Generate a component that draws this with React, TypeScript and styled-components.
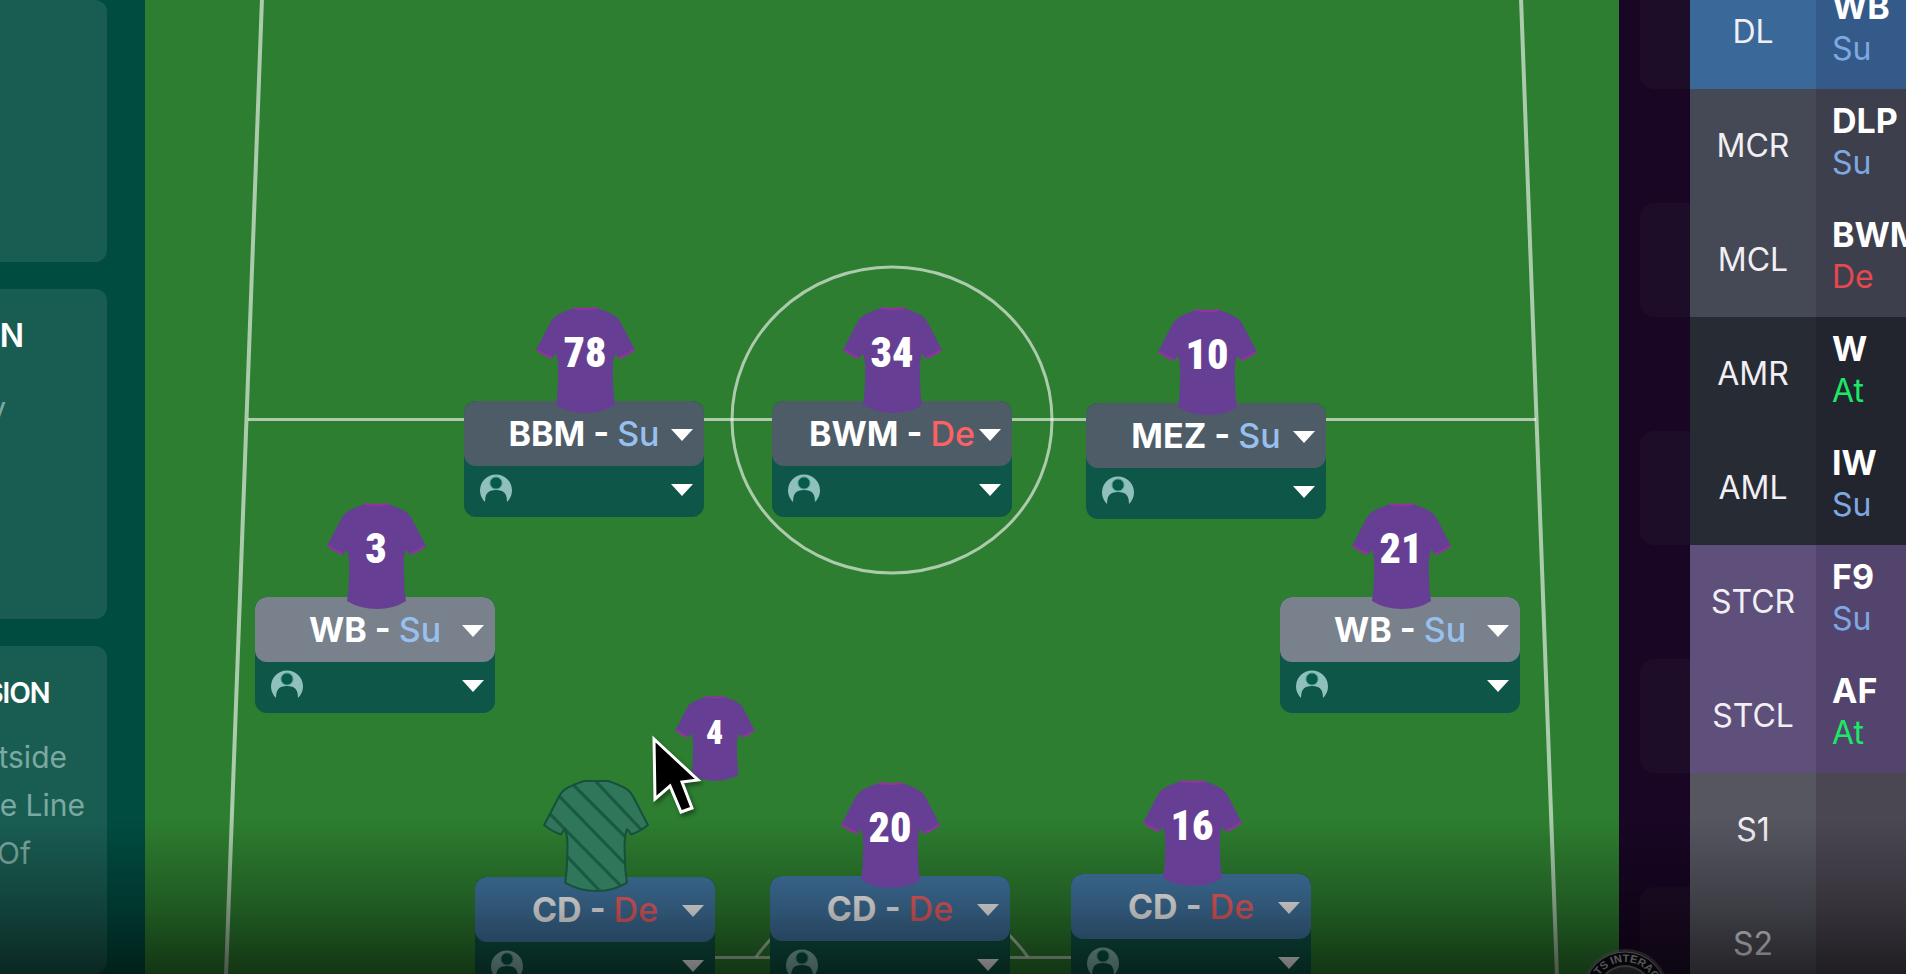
import React from "react";
import styled, { createGlobalStyle } from "styled-components";

type Duty = "Su" | "De" | "At";

const GlobalStyle = createGlobalStyle`
  *, *::before, *::after { box-sizing: border-box; }
  body { margin: 0; background: #180624; font-family: Inter, "Liberation Sans", sans-serif; }
  button { font: inherit; border: 0; padding: 0; cursor: pointer; }
`;

const Page = styled.div`
  position: relative;
  display: grid;
  grid-template-columns: 145px minmax(0, 1fr) 287px;
  height: 100vh;
  overflow: hidden;
`;

const BottomShade = styled.div`
  position: absolute;
  inset: auto 0 0 0;
  height: 156px;
  pointer-events: none;
  background: linear-gradient(rgba(0, 0, 0, 0), rgba(0, 0, 0, 0.28) 55%, rgba(0, 0, 0, 0.58));
`;

/* Instructions column */

const Instructions = styled.aside`
  display: grid;
  grid-template-rows: 262px 330px 1fr;
  gap: 27px;
  padding-right: 38px;
  background: #004c40;
  overflow: hidden;
`;

const InstructionCard = styled.section`
  display: flex;
  flex-direction: column;
  align-items: flex-end;
  min-width: 0;
  overflow: hidden;
  padding-top: 23px;
  border-radius: 0 12px 12px 0;
  background: #195d52;
  color: #7ba9a1;
  font-size: 30px;
  line-height: 48px;
  white-space: nowrap;
`;

const CardTitle = styled.h2<{ $compact?: boolean; $end: number }>`
  margin: 0 ${(p) => p.$end}px ${(p) => (p.$compact ? 16 : 24)}px 0;
  color: #fff;
  font-family: ${(p) => (p.$compact ? '"Inter Tight"' : "Inter")}, "Liberation Sans", sans-serif;
  font-size: ${(p) => (p.$compact ? 28 : 32)}px;
  font-weight: 600;
  line-height: 48px;
`;

const CardLine = styled.p<{ $end: number }>`
  margin: 0 ${(p) => p.$end}px 0 0;
`;

/* Pitch */

const Pitch = styled.main`
  position: relative;
  min-width: 0;
  overflow: hidden;
  background: #2d7e30;
`;

const Markings = styled.svg`
  display: block;
  width: 100%;
  height: 100%;
  fill: none;
  stroke: #ffffff;
  stroke-opacity: 0.6;
`;

const PlayerNode = styled.div<{ $x: number; $y: number }>`
  position: absolute;
  left: calc(${(p) => p.$x} / 1474 * 100%);
  top: calc(${(p) => p.$y} / 974 * 100%);
  display: flex;
  flex-direction: column;
  align-items: center;
  width: 240px;
`;

const DraggedItem = styled(PlayerNode)`
  width: 80px;
`;

const Kit = styled.svg<{ $w: number; $h: number; $overlap?: number }>`
  position: relative;
  z-index: 1;
  display: block;
  flex: none;
  width: ${(p) => p.$w}px;
  height: ${(p) => p.$h}px;
  margin-bottom: -${(p) => p.$overlap ?? 0}px;
  overflow: visible;
`;

const KitNumber = styled.text`
  fill: #fff;
  font-family: "Roboto Condensed", "Open Sans Condensed", sans-serif;
  font-size: 42px;
  font-weight: 900;
  text-anchor: middle;
`;

const PositionCard = styled.div`
  width: 100%;
  border-radius: 12px;
  overflow: hidden;
  background: #0e5748;
`;

const RoleButton = styled.button<{ $tone: string }>`
  position: relative;
  display: flex;
  align-items: center;
  justify-content: center;
  width: 100%;
  height: 65px;
  padding-top: 1px;
  border-radius: 12px;
  background: ${(p) => p.$tone};
  color: #fff;
  font-size: 34px;
  font-weight: 700;
  line-height: 40px;
  white-space: pre;
`;

const cardDuty: Record<Duty, string> = { Su: "#97c0ee", De: "#fb6265", At: "#1ae866" };
const tableDuty: Record<Duty, string> = { Su: "#7ea8e2", De: "#e5484f", At: "#1ae866" };

const CardDuty = styled.span<{ $duty: Duty }>`
  color: ${(p) => cardDuty[p.$duty]};
  font-weight: 500;
`;

const RoleCaret = styled.svg`
  position: absolute;
  right: 11px;
  top: 28px;
  width: 22px;
  height: 12px;
  fill: #fff;
`;

const PlayerButton = styled.button`
  display: flex;
  align-items: center;
  justify-content: space-between;
  width: 100%;
  height: 51px;
  padding: 0 11px 7px 14px;
  background: transparent;
`;

const Avatar = styled.svg`
  width: 36px;
  height: 34px;
`;

const Caret = styled.svg`
  width: 22px;
  height: 12px;
  margin-top: 4px;
  fill: #fff;
`;

const Pointer = styled.svg`
  position: absolute;
  left: calc(501 / 1474 * 100%);
  top: calc(728 / 974 * 100%);
  z-index: 2;
  width: 64px;
  height: 94px;
  filter: drop-shadow(2px 3px 2px rgba(0, 0, 0, 0.4));
`;

/* Squad list */

const Squad = styled.aside`
  position: relative;
  padding-left: 21px;
  background: #180624;
`;

const SquadClip = styled.div`
  height: 100vh;
  overflow: hidden;
`;

const SquadTable = styled.table`
  width: 100%;
  margin-top: -25px;
  border-collapse: collapse;
  table-layout: fixed;
`;

const SquadRow = styled.tr<{ $band?: boolean }>`
  height: 114px;

  td:first-child {
    background: ${(p) => (p.$band ? "#1e0d29" : "transparent")};
  }
`;

const StubCell = styled.td`
  width: 50px;
  padding: 0;
  border-radius: 14px 0 0 14px;
`;

const PositionCell = styled.th<{ $tone: string }>`
  width: 126px;
  padding: 0;
  background: ${(p) => p.$tone};
  color: #f1eff4;
  font-size: 32px;
  font-weight: 400;
  line-height: 40px;
  text-align: center;
`;

const RoleCell = styled.td<{ $tone: string }>`
  padding: 0 0 8px 16px;
  background: ${(p) => p.$tone};
  white-space: nowrap;
  overflow: hidden;
  line-height: 42px;
`;

const RoleName = styled.div`
  color: #fff;
  font-size: 34px;
  font-weight: 700;
`;

const RoleDuty = styled.div<{ $duty: Duty }>`
  color: ${(p) => tableDuty[p.$duty]};
  font-size: 32px;
`;

const Badge = styled.svg`
  position: absolute;
  left: -40px;
  bottom: 0;
  width: 92px;
  height: 27px;
`;

const BadgeText = styled.text`
  fill: #b4b4ba;
  font-family: "Liberation Sans", sans-serif;
  font-size: 11px;
  font-weight: 700;
`;

const SHIRT =
  "M38 1 Q29 4 23 7 Q17 10 14 16 L0 43 Q7 49 16 52 Q18 48 20 47 Q23 55 22 72 Q22 86 20 98 Q33 106 50 106 Q67 106 79 98 Q77 86 77 72 Q76 55 79 47 Q81 48 83 52 Q92 49 99 43 L85 16 Q82 10 76 7 Q70 4 61 1 Z";

function Shirt({ number, small }: { number: string; small?: boolean }) {
  return (
    <Kit
      viewBox={small ? "0 0 99 106" : "-1 0 99 106"}
      $w={small ? 80 : 99}
      $h={small ? 85 : 106}
      $overlap={small ? 0 : 12}
    >
      <path d={SHIRT} fill="#663f95" />
      <path d="M38 1 Q50 3 61 1 M1 43 Q8 48 16 51 M98 43 Q91 48 83 51" fill="none" stroke="#9c2fa3" strokeWidth="2" />
      <KitNumber x="49" y="60">{number}</KitNumber>
    </Kit>
  );
}

function EmptyShirt() {
  return (
    <Kit viewBox="-1 0 99 106" $w={104} $h={111} $overlap={14}>
      <clipPath id="shirt-outline">
        <path d={SHIRT} />
      </clipPath>
      <path d={SHIRT} fill="#30765a" />
      <path
        clipPath="url(#shirt-outline)"
        d="M80 8 L92 24 M48 0 L96 51 M27 4 L80 57 M12 13 L82 85 M4 31 L78 106 M20 71 L56 109"
        stroke="#1b5a42"
        strokeWidth="3"
      />
      <path d={SHIRT} fill="none" stroke="#17513d" strokeWidth="2" strokeLinejoin="round" />
    </Kit>
  );
}

type Player = { x: number; y: number; number?: string; role: string; duty: Duty; tone: string };

const MID = "#4e5c67";
const WIDE = "#78818c";
const BACK = "#4378a5";

const players: Player[] = [
  { x: 319, y: 307, number: "78", role: "BBM", duty: "Su", tone: MID },
  { x: 627, y: 307, number: "34", role: "BWM", duty: "De", tone: MID },
  { x: 941, y: 309, number: "10", role: "MEZ", duty: "Su", tone: MID },
  { x: 110, y: 503, number: "3", role: "WB", duty: "Su", tone: WIDE },
  { x: 1135, y: 503, number: "21", role: "WB", duty: "Su", tone: WIDE },
  { x: 330, y: 780, role: "CD", duty: "De", tone: BACK },
  { x: 625, y: 782, number: "20", role: "CD", duty: "De", tone: BACK },
  { x: 926, y: 780, number: "16", role: "CD", duty: "De", tone: BACK },
];

function PitchPlayer({ x, y, number, role, duty, tone }: Player) {
  return (
    <PlayerNode $x={x} $y={y}>
      {number ? <Shirt number={number} /> : <EmptyShirt />}
      <PositionCard>
        <RoleButton $tone={tone} aria-haspopup="listbox">
          {role} - <CardDuty $duty={duty}>{duty}</CardDuty>
          <RoleCaret viewBox="0 0 22 12">
            <path d="M0 0H22L11 12Z" />
          </RoleCaret>
        </RoleButton>
        <PlayerButton aria-haspopup="listbox" aria-label="Select player">
          <Avatar viewBox="0 0 36 34">
            <path
              d="M7 31 A16 16 0 1 1 29 31 Q29 22 24 20 Q18 18 12 20 Q7 22 7 31Z"
              fill="#8fc1ba"
            />
            <circle cx="18" cy="12" r="6" fill="#07594a" stroke="#4b958a" strokeWidth="1" />
          </Avatar>
          <Caret viewBox="0 0 22 12">
            <path d="M0 0H22L11 12Z" />
          </Caret>
        </PlayerButton>
      </PositionCard>
    </PlayerNode>
  );
}

type Slot = { pos: string; role?: string; duty?: Duty; tones: [string, string] };

const BLUE: [string, string] = ["#3a6999", "#345a89"];
const GREY: [string, string] = ["#444955", "#3d3f4d"];
const DARK: [string, string] = ["#272b34", "#22242e"];
const PURPLE: [string, string] = ["#5e4f7b", "#53446d"];
const BENCH: [string, string] = ["#565661", "#4b4752"];

const slots: Slot[] = [
  { pos: "DL", role: "WB", duty: "Su", tones: BLUE },
  { pos: "MCR", role: "DLP", duty: "Su", tones: GREY },
  { pos: "MCL", role: "BWM", duty: "De", tones: GREY },
  { pos: "AMR", role: "W", duty: "At", tones: DARK },
  { pos: "AML", role: "IW", duty: "Su", tones: DARK },
  { pos: "STCR", role: "F9", duty: "Su", tones: PURPLE },
  { pos: "STCL", role: "AF", duty: "At", tones: PURPLE },
  { pos: "S1", tones: BENCH },
  { pos: "S2", tones: BENCH },
];

export default function App() {
  return (
    <Page>
      <GlobalStyle />
      <Instructions>
        <InstructionCard />
        <InstructionCard>
          <CardTitle $end={83}>N</CardTitle>
          <CardLine $end={101}>y</CardLine>
        </InstructionCard>
        <InstructionCard>
          <CardTitle $compact $end={57}>SION</CardTitle>
          <CardLine $end={40}>tside</CardLine>
          <CardLine $end={22}>e Line</CardLine>
          <CardLine $end={76}>Of</CardLine>
        </InstructionCard>
      </Instructions>

      <Pitch>
        <Markings viewBox="0 0 1474 974" preserveAspectRatio="none">
          <path d="M117 -2 L81 976" strokeWidth="4" />
          <path d="M1376 -2 L1412 976" strokeWidth="4" />
          <path d="M103 419.5 H1391" strokeWidth="3" />
          <ellipse cx="747" cy="420" rx="160" ry="153" strokeWidth="3" />
          <path d="M350 957.5 H1060" strokeWidth="3" />
          <path d="M611 957 Q660 890 747 890 Q834 890 883 957" strokeWidth="3" />
        </Markings>
        {players.map((p) => (
          <PitchPlayer key={p.x} {...p} />
        ))}
        <DraggedItem $x={530} $y={696}>
          <Shirt number="4" small />
        </DraggedItem>
        <Pointer viewBox="0 0 64 94">
          <path
            d="M8 11 L52 52 L36 54 L46 80 L35 84 L24 58 L9 71 Z"
            fill="#000"
            stroke="#fff"
            strokeWidth="3"
          />
        </Pointer>
      </Pitch>

      <Squad>
        <SquadClip>
          <SquadTable>
            <tbody>
              {slots.map((s, i) => (
                <SquadRow key={s.pos} $band={i % 2 === 0}>
                  <StubCell />
                  <PositionCell scope="row" $tone={s.tones[0]}>{s.pos}</PositionCell>
                  <RoleCell $tone={s.tones[1]}>
                    {s.role && <RoleName>{s.role}</RoleName>}
                    {s.duty && <RoleDuty $duty={s.duty}>{s.duty}</RoleDuty>}
                  </RoleCell>
                </SquadRow>
              ))}
            </tbody>
          </SquadTable>
        </SquadClip>
        <Badge viewBox="0 0 92 27">
          <circle cx="46" cy="46" r="44" fill="#77747c" fillOpacity="0.5" />
          <circle cx="46" cy="46" r="41" fill="#0d0b14" stroke="#8c8c92" strokeWidth="1" />
          <circle cx="46" cy="46" r="28" fill="#77777e" />
          <circle cx="46" cy="46" r="26" fill="#3d3c44" />
          <path id="badge-arc" d="M15 46 A31 31 0 0 1 77 46" fill="none" />
          <BadgeText>
            <textPath href="#badge-arc" startOffset="18">TS INTERAC</textPath>
          </BadgeText>
        </Badge>
      </Squad>
      <BottomShade />
    </Page>
  );
}
